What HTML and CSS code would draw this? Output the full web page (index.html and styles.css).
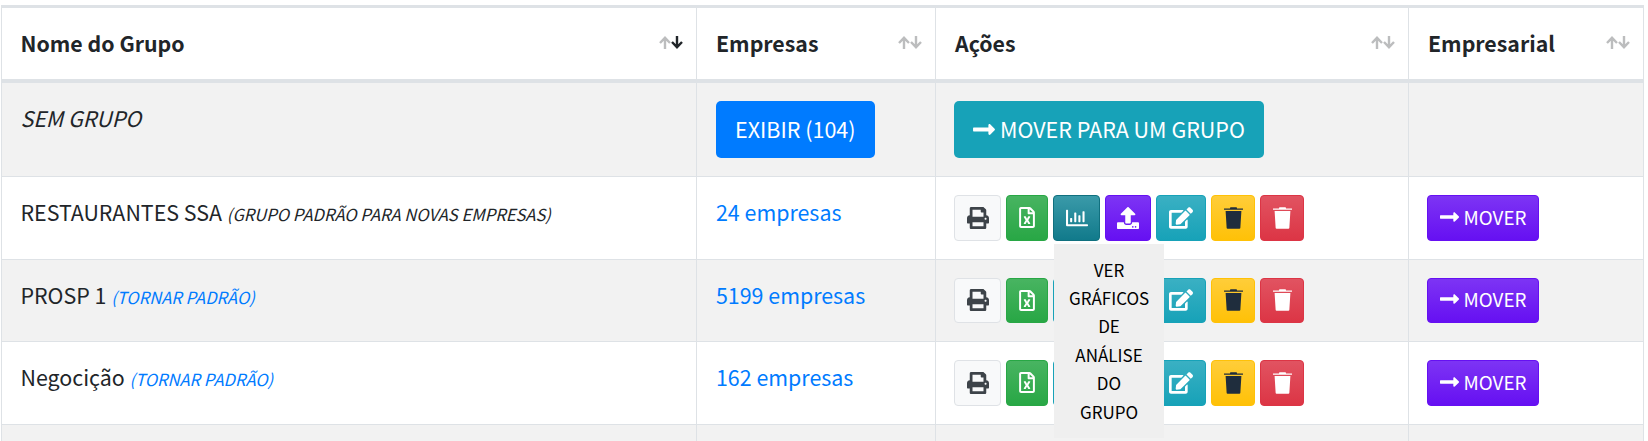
FILE: index.html
```html
<!DOCTYPE html>
<html lang="pt-BR">
<head>
  <meta charset="UTF-8">
  <title>Grupos de Empresas</title>
  <link rel="stylesheet" href="styles.css">
</head>
<body>
  <table class="groups">
    <colgroup>
      <col class="col-name">
      <col class="col-companies">
      <col class="col-actions">
      <col class="col-business">
    </colgroup>
    <thead>
      <tr>
        <th class="sorted">Nome do Grupo <svg class="sort" viewBox="0 0 24 13"><use href="#i-up"/><use class="down" href="#i-down"/></svg></th>
        <th>Empresas <svg class="sort" viewBox="0 0 24 13"><use href="#i-up"/><use class="down" href="#i-down"/></svg></th>
        <th>Ações <svg class="sort" viewBox="0 0 24 13"><use href="#i-up"/><use class="down" href="#i-down"/></svg></th>
        <th>Empresarial <svg class="sort" viewBox="0 0 24 13"><use href="#i-up"/><use class="down" href="#i-down"/></svg></th>
      </tr>
    </thead>
    <tbody>
      <tr class="odd first">
        <td><i>SEM GRUPO</i></td>
        <td><a class="btn btn-lg btn-primary" href="#">EXIBIR (104)</a></td>
        <td>
          <a class="btn btn-lg btn-teal" href="#">
            <svg class="arrow" viewBox="0 0 448 512"><use href="#i-arrow"/></svg>
            MOVER PARA UM GRUPO
          </a>
        </td>
        <td></td>
      </tr>

      <tr>
        <td>RESTAURANTES SSA <i class="note">(GRUPO PADRÃO PARA NOVAS EMPRESAS)</i></td>
        <td><a href="#">24 empresas</a></td>
        <td>
          <div class="actions">
            <a class="btn icon btn-light" href="#"><svg viewBox="0 0 512 512"><use href="#i-print"/></svg></a>
            <a class="btn icon btn-success" href="#"><svg viewBox="0 0 384 512"><use href="#i-excel"/></svg></a>
            <span class="has-tip">
              <a class="btn icon btn-chart btn-info hover" href="#"><svg viewBox="0 0 512 512"><use href="#i-chart"/></svg></a>
              <span class="tip">VER GRÁFICOS DE ANÁLISE DO GRUPO</span>
            </span>
            <a class="btn icon btn-purple" href="#"><svg viewBox="0 0 512 512"><use href="#i-upload"/></svg></a>
            <a class="btn icon btn-info wide" href="#"><svg viewBox="0 0 576 512"><use href="#i-edit"/></svg></a>
            <a class="btn icon btn-warning" href="#"><svg viewBox="0 0 448 512"><use href="#i-trash"/></svg></a>
            <a class="btn icon btn-danger" href="#"><svg viewBox="0 0 448 512"><use href="#i-trash"/></svg></a>
          </div>
        </td>
        <td><a class="btn btn-purple btn-move" href="#"><svg class="arrow" viewBox="0 0 448 512"><use href="#i-arrow"/></svg> MOVER</a></td>
      </tr>

      <tr class="odd compact">
        <td>PROSP 1 <a class="note" href="#">(TORNAR PADRÃO)</a></td>
        <td><a href="#">5199 empresas</a></td>
        <td>
          <div class="actions">
            <a class="btn icon btn-light" href="#"><svg viewBox="0 0 512 512"><use href="#i-print"/></svg></a>
            <a class="btn icon btn-success" href="#"><svg viewBox="0 0 384 512"><use href="#i-excel"/></svg></a>
            <a class="btn icon btn-chart btn-info" href="#"><svg viewBox="0 0 512 512"><use href="#i-chart"/></svg></a>
            <a class="btn icon btn-purple" href="#"><svg viewBox="0 0 512 512"><use href="#i-upload"/></svg></a>
            <a class="btn icon btn-info wide" href="#"><svg viewBox="0 0 576 512"><use href="#i-edit"/></svg></a>
            <a class="btn icon btn-warning" href="#"><svg viewBox="0 0 448 512"><use href="#i-trash"/></svg></a>
            <a class="btn icon btn-danger" href="#"><svg viewBox="0 0 448 512"><use href="#i-trash"/></svg></a>
          </div>
        </td>
        <td><a class="btn btn-purple btn-move" href="#"><svg class="arrow" viewBox="0 0 448 512"><use href="#i-arrow"/></svg> MOVER</a></td>
      </tr>

      <tr>
        <td>Negocição <a class="note" href="#">(TORNAR PADRÃO)</a></td>
        <td><a href="#">162 empresas</a></td>
        <td>
          <div class="actions">
            <a class="btn icon btn-light" href="#"><svg viewBox="0 0 512 512"><use href="#i-print"/></svg></a>
            <a class="btn icon btn-success" href="#"><svg viewBox="0 0 384 512"><use href="#i-excel"/></svg></a>
            <a class="btn icon btn-chart btn-info" href="#"><svg viewBox="0 0 512 512"><use href="#i-chart"/></svg></a>
            <a class="btn icon btn-purple" href="#"><svg viewBox="0 0 512 512"><use href="#i-upload"/></svg></a>
            <a class="btn icon btn-info wide" href="#"><svg viewBox="0 0 576 512"><use href="#i-edit"/></svg></a>
            <a class="btn icon btn-warning" href="#"><svg viewBox="0 0 448 512"><use href="#i-trash"/></svg></a>
            <a class="btn icon btn-danger" href="#"><svg viewBox="0 0 448 512"><use href="#i-trash"/></svg></a>
          </div>
        </td>
        <td><a class="btn btn-purple btn-move" href="#"><svg class="arrow" viewBox="0 0 448 512"><use href="#i-arrow"/></svg> MOVER</a></td>
      </tr>

      <tr class="odd cut">
        <td></td>
        <td></td>
        <td></td>
        <td></td>
      </tr>
    </tbody>
  </table>

  <!-- icons -->
  <svg class="sprite" xmlns="http://www.w3.org/2000/svg">
    <defs>
      <path id="i-up" d="M1 7 6 1.8 11 7M6 2.5V13"/>
      <path id="i-down" d="M13 6 18 11.2 23 6M18 0V10.5"/>
      <path id="i-arrow" d="M313.941 216H12c-6.627 0-12 5.373-12 12v56c0 6.627 5.373 12 12 12h301.941v46.059c0 21.382 25.851 32.09 40.971 16.971l86.059-86.059c9.373-9.373 9.373-24.569 0-33.941l-86.059-86.059c-15.119-15.119-40.971-4.411-40.971 16.971V216z"/>
      <path id="i-print" d="M448 192V77.25c0-8.49-3.37-16.62-9.37-22.63L393.37 9.37c-6-6-14.14-9.37-22.63-9.37H96C78.33 0 64 14.33 64 32v160c-35.35 0-64 28.65-64 64v112c0 8.84 7.16 16 16 16h48v96c0 17.67 14.33 32 32 32h320c17.67 0 32-14.33 32-32v-96h48c8.84 0 16-7.16 16-16V256c0-35.35-28.65-64-64-64zm-64 256H128v-96h256v96zm0-224H128V64h192v48c0 8.84 7.16 16 16 16h48v96zm48 72c-13.25 0-24-10.75-24-24 0-13.26 10.75-24 24-24s24 10.74 24 24c0 13.25-10.75 24-24 24z"/>
      <path id="i-excel" d="M369.9 97.9L286 14C277 5 264.8-.1 252.1-.1H48C21.5 0 0 21.5 0 48v416c0 26.5 21.5 48 48 48h288c26.5 0 48-21.5 48-48V131.9c0-12.7-5.1-25-14.1-34zM332.1 128H256V51.9l76.1 76.1zM48 464V48h160v104c0 13.3 10.7 24 24 24h104v288H48zm212-240h-28.8c-4.4 0-8.4 2.4-10.5 6.3-18 33.1-22.2 42.4-28.6 57.7-13.9-29.1-6.9-17.3-28.6-57.7-2.1-3.9-6.2-6.3-10.6-6.3H124c-9.3 0-15 10-10.4 18l46.3 78-46.3 78c-4.7 8 1.1 18 10.4 18h28.9c4.4 0 8.4-2.4 10.5-6.3 21.7-40 23-45 28.6-57.7 14.9 30.2 5.9 15.9 28.6 57.7 2.1 3.9 6.2 6.3 10.6 6.3H260c9.3 0 15-10 10.4-18L224 320c.7-1.1 30.3-50.5 46.3-78 4.7-8-1.1-18-10.3-18z"/>
      <path id="i-chart" d="M396.8 352h22.4c6.4 0 12.8-6.4 12.8-12.8V108.8c0-6.4-6.4-12.8-12.8-12.8h-22.4c-6.4 0-12.8 6.4-12.8 12.8v230.4c0 6.4 6.4 12.8 12.8 12.8zm-192 0h22.4c6.4 0 12.8-6.4 12.8-12.8V140.8c0-6.4-6.4-12.8-12.8-12.8h-22.4c-6.4 0-12.8 6.4-12.8 12.8v198.4c0 6.4 6.4 12.8 12.8 12.8zm96 0h22.4c6.4 0 12.8-6.4 12.8-12.8V204.8c0-6.4-6.4-12.8-12.8-12.8h-22.4c-6.4 0-12.8 6.4-12.8 12.8v134.4c0 6.4 6.4 12.8 12.8 12.8zM496 400H48V80c0-8.84-7.16-16-16-16H16C7.16 64 0 71.16 0 80v336c0 17.67 14.33 32 32 32h464c8.84 0 16-7.16 16-16v-16c0-8.84-7.16-16-16-16zm-387.2-48h22.4c6.4 0 12.8-6.4 12.8-12.8v-70.4c0-6.4-6.4-12.8-12.8-12.8h-22.4c-6.4 0-12.8 6.4-12.8 12.8v70.4c0 6.4 6.4 12.8 12.8 12.8z"/>
      <path id="i-upload" d="M296 384h-80c-13.3 0-24-10.7-24-24V192h-87.7c-17.8 0-26.7-21.5-14.1-34.1L242.3 5.7c7.5-7.5 19.8-7.5 27.3 0l152.2 152.2c12.6 12.6 3.7 34.1-14.1 34.1H320v168c0 13.3-10.7 24-24 24zm216-8v112c0 13.3-10.7 24-24 24H24c-13.3 0-24-10.7-24-24V376c0-13.3 10.7-24 24-24h136v8c0 30.9 25.1 56 56 56h80c30.9 0 56-25.1 56-56v-8h136c13.3 0 24 10.7 24 24zm-124 88c0-11-9-20-20-20s-20 9-20 20 9 20 20 20 20-9 20-20zm64 0c0-11-9-20-20-20s-20 9-20 20 9 20 20 20 20-9 20-20z"/>
      <path id="i-edit" d="M402.6 83.2l90.2 90.2c3.8 3.8 3.8 10 0 13.8L274.4 405.6l-92.8 10.3c-12.4 1.4-22.9-9.1-21.5-21.5l10.3-92.8L388.8 83.2c3.8-3.8 10-3.8 13.8 0zm162-22.9l-48.8-48.8c-15.2-15.2-39.9-15.2-55.2 0l-35.4 35.4c-3.8 3.8-3.8 10 0 13.8l90.2 90.2c3.8 3.8 10 3.8 13.8 0l35.4-35.4c15.2-15.3 15.2-40 0-55.2zM384 346.2V448H64V128h229.8c3.2 0 6.2-1.3 8.5-3.5l40-40c7.6-7.6 2.2-20.5-8.5-20.5H48C21.5 64 0 85.5 0 112v352c0 26.5 21.5 48 48 48h352c26.5 0 48-21.5 48-48V306.2c0-10.7-12.9-16-20.5-8.5l-40 40c-2.2 2.3-3.5 5.3-3.5 8.5z"/>
      <path id="i-trash" d="M150 0h148l10 30h132c4 0 8 4 8 8v16c0 4-4 8-8 8H8c-4 0-8-4-8-8V38c0-4 4-8 8-8h132zM38 92h372l-24 392c-1 16-14 28-30 28H92c-16 0-29-12-30-28z"/>
    </defs>
  </svg>
</body>
</html>
```

FILE: styles.css
```css
html, body { margin: 0; height: 441px; overflow: hidden; }
body {
  font-family: "Noto Sans CJK SC", "Source Sans Pro", "Noto Sans", sans-serif;
  font-size: 21.4px;
  line-height: 34px;
  color: #212529;
  background: #fff;
}
a { color: #007bff; text-decoration: none; }

.sprite { display: none; }

.groups {
  width: 1642px;
  margin: 5px 0 0 1px;
  border-collapse: collapse;
  table-layout: fixed;
  border: 1px solid #dee2e6;
}
.col-name { width: 695px; }
.col-companies { width: 239px; }
.col-actions { width: 473px; }
.col-business { width: 235px; }

.groups th, .groups td {
  border: 1px solid #dee2e6;
  padding: 18px 19px;
  text-align: left;
  vertical-align: top;
}
.groups th:first-child, .groups td:first-child { padding-left: 18.5px; }
.groups td:nth-child(3), .groups td:nth-child(4) { padding-left: 18px; }
.groups th {
  position: relative;
  height: 74px;
  box-sizing: border-box;
  padding-top: 18px;
  padding-bottom: 18px;
  border-top-width: 3px;
  border-bottom-width: 4px;
  vertical-align: middle;
  font-size: 21.3px;
  line-height: 32px;
  font-weight: 700;
}
.groups td { height: 46px; }

/* sort arrows */
.sort {
  position: absolute;
  top: 28px;
  right: 13px;
  width: 24px;
  height: 13px;
  fill: none;
  stroke: #bcbdbe;
  stroke-width: 2.4;
}
.sorted .sort .down { stroke: #212529; }

.odd td { background: #f2f2f2; }
.first td { height: 57px; }
.compact td { height: 45px; }
.compact .btn { height: 45px; }
.cut td { height: 60px; }

.note { font-size: 16.6px; font-style: italic; }

.btn {
  display: inline-flex;
  align-items: center;
  justify-content: center;
  box-sizing: border-box;
  height: 46px;
  border: 1px solid transparent;
  border-radius: 4px;
  color: #fff;
  vertical-align: top;
}
.btn-lg {
  height: 57px;
  padding: 0 18px;
  font-size: 21.5px;
  border-radius: 5px;
}
.btn-move {
  width: 112px;
  padding-bottom: 2px;
  font-size: 18.8px;
  gap: 5px;
}
.arrow { width: 22px; height: 25px; fill: #fff; margin-right: 5px; }
.btn-move .arrow { width: 19px; height: 22px; margin-right: 0; }

.btn-primary { background: #007bff; }
.btn-teal { background: #17a2b8; }
.btn-info { background: linear-gradient(#3ab0c3, #17a2b8); border-color: #17a2b8; }
.btn-info.hover { background: linear-gradient(#3a9aa9, #117a8b); border-color: #10707f; }
.btn-success { background: linear-gradient(#48b461, #28a745); border-color: #28a745; }
.btn-warning { background: linear-gradient(#ffcd39, #ffc107); border-color: #ffc107; color: #1f2d3d; }
.btn-danger { background: linear-gradient(#e15361, #dc3545); border-color: #dc3545; }
.btn-purple { background: linear-gradient(#7d34f4, #6610f2); border-color: #6610f2; }
.btn-light { background: #f8f9fa; border-color: #dfe2e6; color: #3d4349; }

.actions { display: flex; gap: 5px; }
.icon { width: 44px; }
.icon svg { height: 22px; width: 22px; fill: currentColor; }
.btn-light { width: 47px; }
.btn-success { width: 42px; }
.btn-success svg { height: 21px; }
.has-tip { position: relative; display: block; }
.btn-chart { width: 47px; }
.btn-purple.icon { width: 46px; }
.wide { width: 50px; }
.wide svg { width: 24px; height: 22px; }
.btn-warning svg, .btn-danger svg { width: 19px; height: 22px; }

.tip {
  position: absolute;
  top: 49px;
  left: 1px;
  z-index: 2;
  box-sizing: border-box;
  width: 110px;
  padding: 12px 15px 12px;
  background: #efefef;
  color: #000;
  font-size: 17px;
  line-height: 28.4px;
  text-align: center;
}
```
